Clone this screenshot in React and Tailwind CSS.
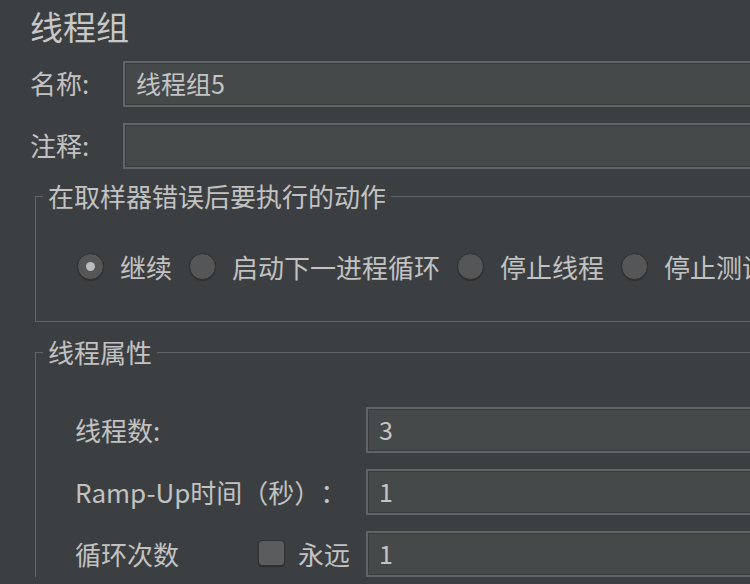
import React from "react";

const Field = ({ value }) => (
  <div className="flex-1 h-[46px] bg-[#45494a] border-2 border-[#606467] shadow-[inset_0_0_0_1px_#3a3d3f] flex items-center pl-[11px] text-[25px] text-[#c4c4c4]">
    {value}
  </div>
);

const Radio = ({ checked, label }) => (
  <div className="flex items-center">
    <span className="w-[27px] h-[27px] rounded-full bg-[#545658] border border-[#2e3032] shadow-[0_1px_1px_#2c2e30] flex items-center justify-center">
      {checked && <span className="w-[9px] h-[9px] rounded-full bg-[#bdbdbd]" />}
    </span>
    <span className="ml-[16px] mr-[17px] whitespace-nowrap">{label}</span>
  </div>
);

const App = () => {
  return (
    <div className="w-[750px] h-[584px] overflow-hidden bg-[#3c3f41] text-[#c2c2c2] font-['Noto_Sans_CJK_SC','Noto_Sans',sans-serif]">
      <div className="w-[1000px] pl-[30px] pt-[5px]">
        <h1 className="text-[33px] leading-[42px] text-[#c8c8c8]">线程组</h1>

        <div className="flex items-center mt-[14px] text-[26px]">
          <span className="w-[93px] -mt-[3px]">名称:</span>
          <Field value="线程组5" />
        </div>
        <div className="flex items-center mt-[16px] text-[26px]">
          <span className="w-[93px] -mt-[3px]">注释:</span>
          <Field value="" />
        </div>

        <fieldset className="ml-[5px] mt-[12px] border border-[#626568] text-[26px]">
          <legend className="ml-[7px] px-[5px] leading-[30px]">在取样器错误后要执行的动作</legend>
          <div className="flex items-center h-[30px] pl-[41px] mt-[40px] mb-[40px]">
            <Radio checked label="继续" />
            <Radio label="启动下一进程循环" />
            <Radio label="停止线程" />
            <Radio label="停止测试" />
          </div>
        </fieldset>

        <fieldset className="ml-[5px] mt-[15px] border border-[#626568] border-b-0 text-[26px]">
          <legend className="ml-[7px] px-[5px] leading-[30px]">线程属性</legend>
          <div className="pl-[39px] pt-[40px]">
            <div className="flex items-center">
              <span className="w-[291px] -mt-[2px]">线程数:</span>
              <Field value="3" />
            </div>
            <div className="flex items-center mt-[16px]">
              <span className="w-[291px] -mt-[2px] whitespace-nowrap [text-spacing-trim:space-all]">Ramp-Up时间（秒）：</span>
              <Field value="1" />
            </div>
            <div className="flex items-center mt-[16px]">
              <div className="w-[291px] -mt-[2px] flex items-center pr-[16px]">
                <span>循环次数</span>
                <span className="ml-auto w-[27px] h-[26px] rounded-[4px] bg-[#5a5c5d] border border-[#2e3032] shadow-[0_1px_1px_#2c2e30]" />
                <span className="ml-[13px]">永远</span>
              </div>
              <Field value="1" />
            </div>
          </div>
        </fieldset>
      </div>
    </div>
  );
};

export default App;
